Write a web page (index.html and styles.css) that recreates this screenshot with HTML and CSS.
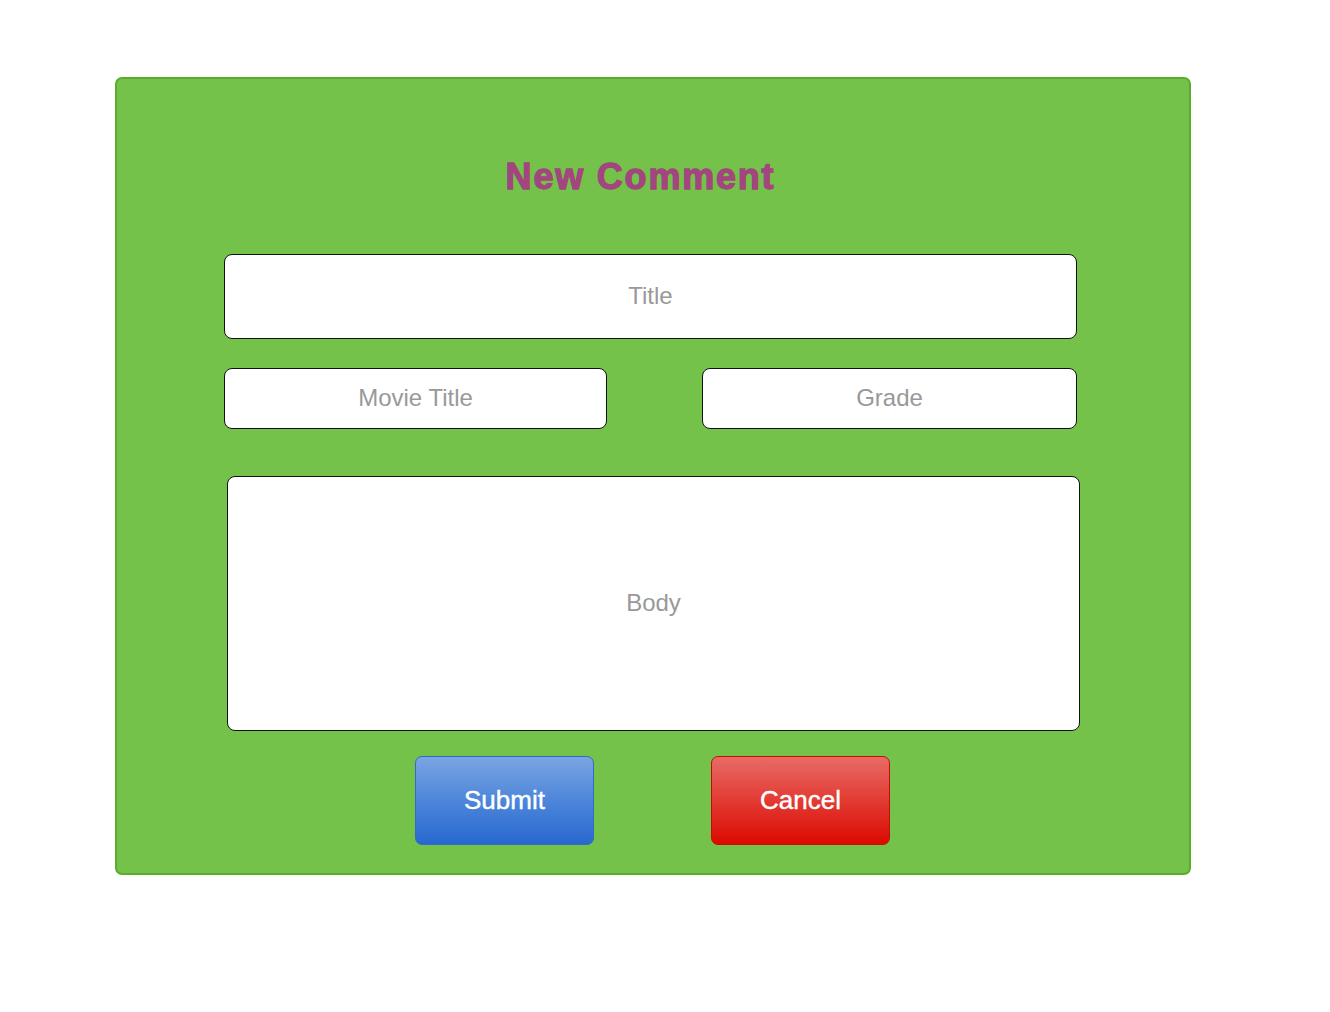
FILE: index.html
```html
<!DOCTYPE html>
<html lang="en">
<head>
<meta charset="utf-8">
<title>New Comment</title>
<link rel="stylesheet" href="styles.css">
</head>
<body>
  <div class="card">
    <h1 class="heading">New Comment</h1>
    <form class="form">
      <input class="field field-title" type="text" placeholder="Title">
      <div class="row">
        <input class="field field-movie" type="text" placeholder="Movie Title">
        <input class="field field-grade" type="text" placeholder="Grade">
      </div>
      <textarea class="field field-body" placeholder="Body"></textarea>
      <div class="actions">
        <button type="button" class="btn btn-submit">Submit</button>
        <button type="button" class="btn btn-cancel">Cancel</button>
      </div>
    </form>
  </div>
</body>
</html>
```
FILE: styles.css
```css
* { box-sizing: border-box; }

html, body {
  margin: 0;
  padding: 0;
  background: #ffffff;
  font-family: "Liberation Sans", Arial, sans-serif;
}

body {
  padding: 77px 0 0 115px;
}

.card {
  width: 1076px;
  height: 798px;
  background: #74c24a;
  border: 2px solid #58ae2b;
  border-radius: 7px;
  padding: 77px 0 0 0;
}

.heading {
  margin: 0;
  height: 42px;
  line-height: 42px;
  font-size: 36px;
  font-weight: 700;
  letter-spacing: 1.8px;
  color: #a3457f;
  -webkit-text-stroke: 1.3px #a3457f;
  text-align: center;
  padding-right: 25px;
}

.form {
  display: flex;
  flex-direction: column;
  align-items: flex-start;
  padding-left: 107px;
}

.field {
  background: #ffffff;
  border: 1px solid #111111;
  border-radius: 8px;
  font-family: "Liberation Sans", Arial, sans-serif;
  font-size: 24px;
  color: #333;
  text-align: center;
  outline: none;
}

.field::placeholder {
  color: #999999;
  opacity: 1;
}

.field-title {
  margin-top: 56px;
  width: 853px;
  height: 85px;
  padding-bottom: 2px;
}

.row {
  margin-top: 29px;
  width: 853px;
  display: flex;
  justify-content: space-between;
}

.field-movie {
  width: 383px;
  height: 61px;
  padding-bottom: 2px;
}

.field-grade {
  width: 375px;
  height: 61px;
  padding-bottom: 2px;
}

.field-body {
  margin-top: 47px;
  margin-left: 3px;
  width: 853px;
  height: 255px;
  resize: none;
  padding: 112px 10px 0 10px;
  line-height: 28px;
}

.actions {
  margin-top: 25px;
  margin-left: 191px;
  display: flex;
  gap: 117px;
}

.btn {
  width: 179px;
  height: 89px;
  border-radius: 7px;
  font-family: "Liberation Sans", Arial, sans-serif;
  font-size: 26px;
  color: #ffffff;
  -webkit-text-stroke: 0.4px #ffffff;
  cursor: pointer;
  padding: 0;
}

.btn-submit {
  background: linear-gradient(to bottom, #7aa5e1 0%, #4d86da 50%, #2868cf 100%);
  border: 1px solid #2f6cc9;
}

.btn-cancel {
  background: linear-gradient(to bottom, #e96b66 0%, #e23b33 50%, #db0a00 100%);
  border: 1px solid #c70c04;
}
```
